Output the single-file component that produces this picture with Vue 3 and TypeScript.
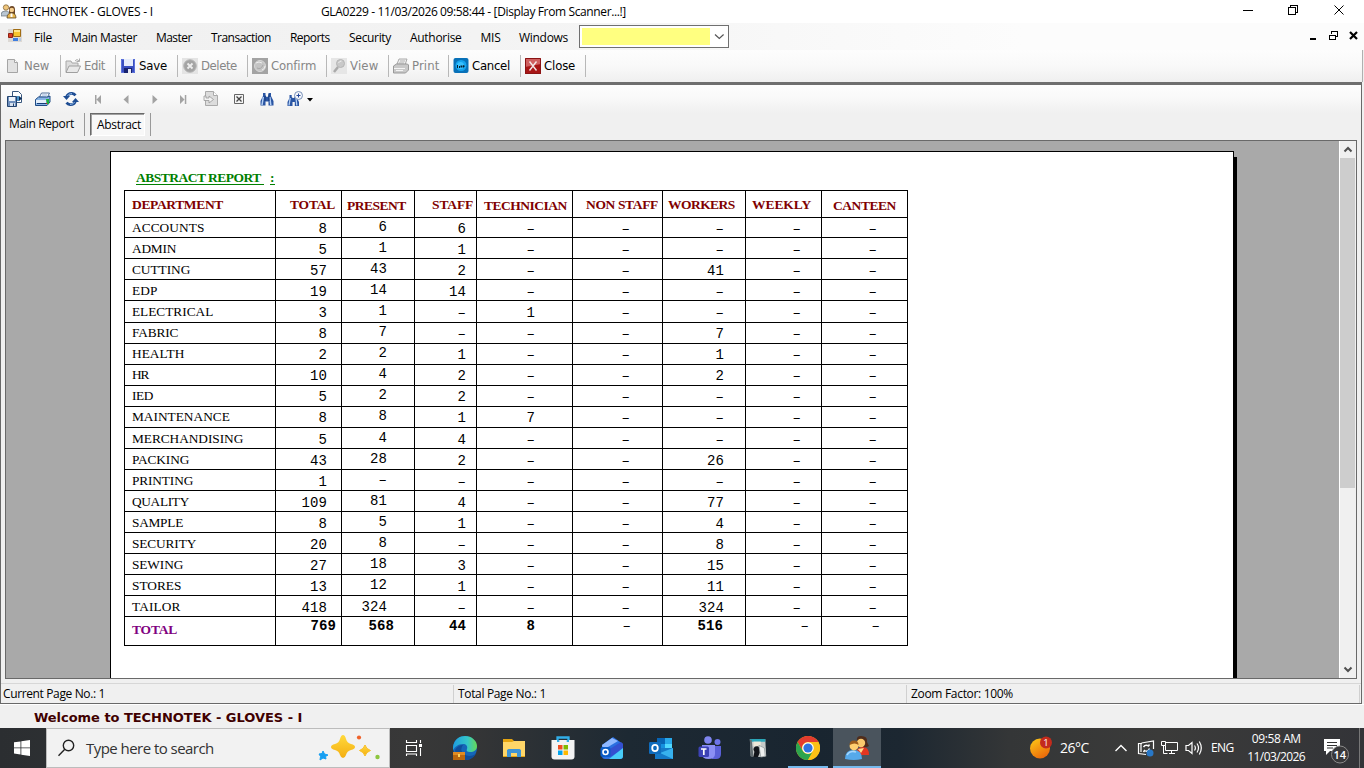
<script setup lang="ts">
import type { Directive } from 'vue'

// Tracks a label so that its ink spans the given number of pixels.
const vFit: Directive<HTMLElement, number> = {
  mounted(el, binding) {
    const natural = el.getBoundingClientRect().width
    const count = (el.textContent ?? '').trim().length
    if (count > 1) {
      const spacing = (binding.value - 0.7 - natural) / (count - 1)
      el.style.letterSpacing = spacing.toFixed(3) + 'px'
      el.style.marginRight = (-spacing).toFixed(3) + 'px'
    }
  },
}

interface Label { text: string; width: number }
interface Row { name: string; width: number; values: string[] }

const menu: Label[] = [
  { text: 'File', width: 19 },
  { text: 'Main Master', width: 67 },
  { text: 'Master', width: 37 },
  { text: 'Transaction', width: 61 },
  { text: 'Reports', width: 41 },
  { text: 'Security', width: 43 },
  { text: 'Authorise', width: 52.5 },
  { text: 'MIS', width: 21 },
  { text: 'Windows', width: 50 },
]

const tools = [
  { text: 'New', width: 26, icon: 'new', on: false },
  { text: 'Edit', width: 22, icon: 'edit', on: false },
  { text: 'Save', width: 29, icon: 'save', on: true },
  { text: 'Delete', width: 37, icon: 'delete', on: false },
  { text: 'Confirm', width: 46, icon: 'confirm', on: false },
  { text: 'View', width: 29, icon: 'view', on: false },
  { text: 'Print', width: 28, icon: 'print', on: false },
  { text: 'Cancel', width: 39, icon: 'cancel', on: true },
  { text: 'Close', width: 32, icon: 'close', on: true },
]

const heads = [
  { text: 'DEPARTMENT', width: 92 },
  { text: 'TOTAL', width: 46 },
  { text: 'PRESENT', width: 60, low: true },
  { text: 'STAFF', width: 42 },
  { text: 'TECHNICIAN', width: 84, low: true },
  { text: 'NON STAFF', width: 73 },
  { text: 'WORKERS', width: 68 },
  { text: 'WEEKLY', width: 60 },
  { text: 'CANTEEN', width: 64, low: true },
]

const row = (name: string, width: number, values: string): Row => ({
  name,
  width,
  values: values.replace(/-/g, '–').split(' '),
})

const rows: Row[] = [
  row('ACCOUNTS', 73, '8 6 6 - - - - -'),
  row('ADMIN', 45, '5 1 1 - - - - -'),
  row('CUTTING', 59, '57 43 2 - - 41 - -'),
  row('EDP', 26, '19 14 14 - - - - -'),
  row('ELECTRICAL', 82, '3 1 - 1 - - - -'),
  row('FABRIC', 47, '8 7 - - - 7 - -'),
  row('HEALTH', 53, '2 2 1 - - 1 - -'),
  row('HR', 18, '10 4 2 - - 2 - -'),
  row('IED', 22, '5 2 2 - - - - -'),
  row('MAINTENANCE', 98.5, '8 8 1 7 - - - -'),
  row('MERCHANDISING', 112, '5 4 4 - - - - -'),
  row('PACKING', 58, '43 28 2 - - 26 - -'),
  row('PRINTING', 62, '1 - - - - - - -'),
  row('QUALITY', 58, '109 81 4 - - 77 - -'),
  row('SAMPLE', 52, '8 5 1 - - 4 - -'),
  row('SECURITY', 65, '20 8 - - - 8 - -'),
  row('SEWING', 52, '27 18 3 - - 15 - -'),
  row('STORES', 50, '13 12 1 - - 11 - -'),
  row('TAILOR', 49, '418 324 - - - 324 - -'),
]
const totals = '769 568 44 8 – 516 – –'.split(' ')
</script>

<template>
  <div class="window">
    <header class="title">
      <svg class="app-icon" width="16" height="16" viewBox="0 0 16 16">
        <path d="M0 12q0-4 4-4 5 0 5 4v1H0z" fill="#b9c6d2" stroke="#54606c" stroke-width=".6" />
        <circle cx="5" cy="4.500" r="2.700" fill="#f0c67c" stroke="#876a3c" stroke-width=".8" />
        <path d="M8 6q0-3 3-3t3 4v5H8z" fill="#6b4423" />
        <circle cx="10.800" cy="7" r="2.300" fill="#f6cf8e" />
        <path d="M6 15q0-5 4.500-5t4.500 5z" fill="#e8b64c" stroke="#5e4a2c" stroke-width=".8" />
        <path d="M9.500 10.500h2V14h-2z" fill="#fff" />
      </svg>
      <span class="title-name"><span v-fit="132.700">TECHNOTEK - GLOVES - I</span></span>
      <span class="title-doc"><span v-fit="306">GLA0229 - 11/03/2026 09:58:44 - [Display From Scanner...!]</span></span>
      <svg class="win-buttons" width="110" height="20" viewBox="0 0 110 20" fill="none" stroke="#000" shape-rendering="crispEdges">
        <path d="M3 10.500h10M48.500 7.500h7v7h-7zM50.500 7V5.500h7v7H56" />
        <path d="M94.500 5.500l9 9M103.500 5.500l-9 9" shape-rendering="auto" />
      </svg>
    </header>

    <nav class="menubar">
      <svg class="form-icon" width="16" height="16" viewBox="0 0 16 16">
        <path d="M1 1h14v13H1z" fill="#dcd8d4" />
        <path d="M6.500 1.500h7v7h-7z" fill="#f7c52e" stroke="#a06c14" />
        <path d="M1.500 5.500h4v4h-4z" fill="#d83a23" stroke="#8c2114" />
        <path d="M6 10h5v3H6z" fill="#3d7de0" /><path d="M12 10h2v3h-2z" fill="#b7c9de" />
        <path d="M7 2h6v2H7z" fill="#ffe58a" />
      </svg>
      <span v-for="m in menu" :key="m.text" class="menu-item"><span v-fit="m.width">{{ m.text }}</span></span>
      <div class="combo">
        <i class="combo-fill"></i>
        <svg width="17" height="19" viewBox="0 0 17 19"><path d="M5 7.500l4.300 4 4.300-4" fill="none" stroke="#555" stroke-width="1.200" /></svg>
      </div>
      <svg class="mdi-buttons" width="50" height="14" viewBox="0 0 50 14" fill="none" stroke="#000" shape-rendering="crispEdges">
        <path d="M0 10h6" stroke-width="2" />
        <path d="M19.500 6.500h6v4h-6zM19 6h7M21.500 5V2.500h6v5H26M21 2h7" />
        <path d="M40 3l7 7M47 3l-7 7" stroke-width="2.200" shape-rendering="auto" />
      </svg>
    </nav>

    <div class="toolbar">
      <div v-for="t in tools" :key="t.text" class="tool" :class="{ on: t.on }">
        <svg width="16" height="16" viewBox="0 0 16 16">
          <template v-if="t.icon === 'new'">
            <path d="M1.500 1.500h7l3 3v10h-10z" fill="#e2e2e2" stroke="#a5a5a5" /><path d="M8.500 1.500v3h3" fill="#fff" stroke="#a5a5a5" />
          </template>
          <template v-else-if="t.icon === 'edit'">
            <path d="M1 14V3h5l1 2h6v3" fill="#ddd" stroke="#a8a8a8" /><path d="M1 14.500L4 8h11.500l-3 6.500z" fill="#e8e8e8" stroke="#9f9f9f" /><path d="M10 3q2-3 4 0M14.500.500v3h-3" fill="none" stroke="#aaa" />
          </template>
          <template v-else-if="t.icon === 'save'">
            <path d="M1 1h14v14H2l-1-1z" fill="#3a4fc0" /><path d="M1.500 1.500h13v13h-13z" fill="none" stroke="#5c72dc" /><path d="M4 1h9v7H4z" fill="#e6ecfb" /><path d="M4 10h8v5H4z" fill="#17226f" /><path d="M8 11h3v4H8z" fill="#e8eaf4" />
          </template>
          <template v-else-if="t.icon === 'delete'">
            <path d="M0 0h16v16H0z" fill="#e4e4e4" /><circle cx="8" cy="8" r="6.300" fill="#a4a4a4" stroke="#b8b8b8" /><path d="M5.500 5.500l5 5M10.500 5.500l-5 5" stroke="#eee" stroke-width="1.800" />
          </template>
          <template v-else-if="t.icon === 'confirm'">
            <path d="M0 0h16v16H0z" fill="#a3a3a3" /><circle cx="8" cy="8" r="5.500" fill="#c4c4c4" stroke="#d8d8d8" /><path d="M5 10q4 2 6-3" stroke="#a8a8a8" fill="none" /><path d="M10 12q3-1 3-4M4 5q3-2 6 0" stroke="#eee" fill="none" />
          </template>
          <template v-else-if="t.icon === 'view'">
            <path d="M0 0h16v16H0z" fill="#e6e6e6" /><path d="M3 14l4-5" stroke="#aaa" stroke-width="2.500" /><circle cx="9.500" cy="5.500" r="4" fill="#c9c9c9" stroke="#b5b5b5" /><path d="M7.500 5q1-2 3-2" fill="none" stroke="#f2f2f2" />
          </template>
          <template v-else-if="t.icon === 'print'">
            <path d="M4 6l2-5h8l-2 6z" fill="#eee" stroke="#aaa" /><path d="M7 3h5M6 5h5" stroke="#b5b5b5" /><path d="M.500 8l3-2h11l1 1v5l-3 3H.500z" fill="#c9c9c9" stroke="#999" /><path d="M1 10.500h11M3 12.500h7" stroke="#f4f4f4" />
          </template>
          <template v-else-if="t.icon === 'cancel'">
            <rect x=".5" width="15" height="15" rx="2" fill="#0871b8" /><circle cx="8" cy="7.500" r="5.500" fill="#16a4ee" /><circle cx="7.500" cy="7.500" r="3.500" fill="#39c1ff" /><path d="M4 7h1v3H4zM6 8h1v2H6zM7.500 7.500h2v2h-2zM10 7l2 1-2 2z" fill="#071d2d" />
          </template>
          <template v-else>
            <path d="M0 0h16v16H0z" fill="#a81616" /><path d="M0 0h16v6L0 9z" fill="#cf6060" /><path d="M.500.500h15v15H.500z" fill="none" stroke="#8b1414" /><path d="M4.500 3.500l7 9M11.500 3.500l-7 9" stroke="#f2e8e8" stroke-width="1.400" />
          </template>
        </svg>
        <span v-fit="t.width">{{ t.text }}</span>
      </div>
    </div>

    <section class="report">
      <div class="report-tools">
        <svg width="16" height="16" viewBox="0 0 16 16">
          <path d="M5.500.500h6l3 3v8h-9z" fill="#fff" stroke="#3a587e" /><path d="M12 5l3 2.500-3 2.500z" fill="#0a2a55" /><path d="M10 5h2v5h-2z" fill="#4a93c7" /><path d="M.500 5.500h9v10H.500z" fill="#6f90bd" stroke="#24446f" /><path d="M2 6h6v4H2z" fill="#eef3fa" /><path d="M3 12h5v3H3z" fill="#d8e2ef" /><path d="M6 12.500h1V15H6z" fill="#24446f" />
        </svg>
        <svg width="16" height="16" viewBox="0 0 16 16">
          <path d="M4.500 6l2-4h8l-2.500 5z" fill="#fff" stroke="#4f6e99" /><path d="M7 4h5M6 6h5" stroke="#8fb1dd" /><path d="M.500 8.500l3-2.500h9l2.500-1v6l-3 3.500H.500z" fill="#88b4e4" stroke="#1f4a84" /><path d="M1 9h10v3H1z" fill="#e4effb" /><path d="M11 8h3v5h-2z" fill="#1eb13b" /><path d="M11 12h1v1h-1z" fill="#d12" /><path d="M2 12.500h9" stroke="#173e78" />
        </svg>
        <svg width="16" height="16" viewBox="0 0 16 16" fill="none">
          <path d="M3.500 6Q5 2 9 2.300q2 .2 3.500 2M12.500 10Q11 14 7 13.700q-2-.2-3.500-2" stroke="#1e4d93" stroke-width="2.800" />
          <path d="M4 5.500Q5.500 2.500 9 2.500M12 10.500q-1.500 3-5 3" stroke="#8db7e8" stroke-width="1" />
          <path d="M0 5h7L3.500 9zM9 11h7l-3.500-4z" fill="#1e4d93" />
        </svg>
        <svg class="nudge" width="16" height="16" viewBox="0 0 16 16" fill="#a3a3a3"><path d="M5 4h1.500v9H5zM11 4v9L6.500 8.500z" /></svg>
        <svg class="nudge" width="16" height="16" viewBox="0 0 16 16" fill="#a3a3a3"><path d="M10.500 4v9L5.500 8.500z" /></svg>
        <svg width="16" height="16" viewBox="0 0 16 16" fill="#a3a3a3"><path d="M5.500 4v9l5-4.500z" /></svg>
        <svg width="16" height="16" viewBox="0 0 16 16" fill="#a3a3a3"><path d="M5 4v9l4.500-4.500zM9.800 4h1.500v9H9.800z" /></svg>
        <svg width="16" height="16" viewBox="0 0 16 16">
          <path d="M2.500.500h8l4 4v10h-12z" fill="#dcdcdc" stroke="#aaa" /><path d="M10.500.500v4h4" fill="#fff" stroke="#aaa" /><path d="M1 5v4.500h5v2.500l4.500-3.500L6 5v2H3V5z" fill="#f2f2f2" stroke="#999" stroke-width=".8" />
        </svg>
        <svg width="16" height="16" viewBox="0 0 16 16"><path d="M3.500 3.500h9v9h-9z" fill="#f4f4f4" stroke="#666" /><path d="M5.500 5.500l5 5M10.500 5.500l-5 5" stroke="#444" stroke-width="1.300" /></svg>
        <svg width="16" height="16" viewBox="0 0 16 16">
          <path d="M4 2h2.500v2l1 2h1l1-2V2H12v3l2.500 5v4.500h-5v-4h-3v4h-5V10L4 5z" fill="#2a55a3" /><path d="M4.300 6L3 14M10.800 6l1 8" stroke="#b4d0f5" stroke-width="1.500" /><path d="M6 5v5M10 3v7" stroke="#14387a" />
        </svg>
        <svg width="16" height="16" viewBox="0 0 16 16">
          <path d="M2.500 4h2.200v2l1 1h1l1-1V4H10v3l2 4v4H7.800v-4H5.500v4H.500v-4l2-4z" fill="#2a55a3" /><path d="M3.200 7L2 14.500M9 7l.8 7.500" stroke="#b4d0f5" stroke-width="1.300" /><circle cx="11.500" cy="4.500" r="4" fill="#f3f6fb" stroke="#7890b8" /><path d="M9.500 4.500h4M11.500 2.500v4" stroke="#23469a" />
        </svg>
        <svg class="caret" width="6" height="4" viewBox="0 0 6 4"><path d="M0 0h6L3 3.500z" /></svg>
      </div>

      <div class="tabs">
        <div class="tab"><span v-fit="66">Main Report</span></div>
        <div class="tab active"><span v-fit="45">Abstract</span></div>
        <i class="tab-end"></i>
      </div>

      <div class="viewer">
        <div class="canvas">
          <div class="page">
            <h1><span class="heading"><span v-fit="126">ABSTRACT REPORT</span></span><b>:</b></h1>
            <div class="table">
              <div class="row head">
                <div v-for="h in heads" :key="h.text" class="cell" :class="{ low: h.low }"><span v-fit="h.width">{{ h.text }}</span></div>
              </div>
              <div v-for="(r, i) in rows" :key="r.name" class="row" :class="{ tall: i === 4, raised: i > 4 && i < 10 }">
                <div class="cell name"><span v-fit="r.width">{{ r.name }}</span></div>
                <div v-for="(v, j) in r.values" :key="j" class="cell num">{{ v }}</div>
              </div>
              <div class="row total">
                <div class="cell name"><span v-fit="46">TOTAL</span></div>
                <div v-for="(v, j) in totals" :key="j" class="cell num">{{ v }}</div>
              </div>
            </div>
          </div>
          <i class="page-shadow"></i>
        </div>
        <div class="scrollbar">
          <svg width="16" height="17" viewBox="0 0 16 17"><path d="M4.500 10.500L8 7l3.500 3.500" fill="none" stroke="#505050" stroke-width="2" /></svg>
          <i class="thumb"></i>
          <svg width="16" height="17" viewBox="0 0 16 17"><path d="M4.500 6.500L8 10l3.500-3.500" fill="none" stroke="#505050" stroke-width="2" /></svg>
        </div>
      </div>

      <div class="status">
        <div><span v-fit="103">Current Page No.: 1</span></div>
        <div><span v-fit="89">Total Page No.: 1</span></div>
        <div><span v-fit="103">Zoom Factor: 100%</span></div>
      </div>
    </section>

    <div class="welcome"><span v-fit="269">Welcome to TECHNOTEK - GLOVES - I</span></div>

    <footer class="taskbar">
      <div class="start">
        <svg width="16" height="16" viewBox="0 0 16 16" fill="#fff"><path d="M0 2.300l6.500-.9v6.100H0zM7.300 1.300L16 0v7.500H7.300zM0 8.300h6.500v6.200L0 13.600zM7.300 8.300H16V16l-8.700-1.300z" /></svg>
      </div>
      <div class="search">
        <svg width="18" height="18" viewBox="0 0 18 18" fill="none" stroke="#222" stroke-width="1.400"><circle cx="10.500" cy="6.500" r="5.200" /><path d="M6.800 10.300L.500 16.700" /></svg>
        <span class="search-text"><span v-fit="129">Type here to search</span></span>
        <svg class="sparkles" width="66" height="28" viewBox="0 0 66 28">
          <defs><linearGradient id="gold" x2="0" y2="1"><stop stop-color="#ffd93b" /><stop offset="1" stop-color="#f4ae12" /></linearGradient></defs>
          <path d="M25 1q2 0 3 4 1 4 5 5 4 1 4 3t-4 3q-4 1-5 5-1 3-3 3t-3-3q-1-4-5-5-4-1-4-3t4-3q4-1 5-5 1-4 3-4z" fill="url(#gold)" />
          <path d="M47 11q1 4 5.500 5.500-4.500 1.500-5.500 5.500-1-4-5.500-5.500Q46 15 47 11z" fill="url(#gold)" stroke="#f9bd20" />
          <path d="M5 17l1.500 3 3.500 1-2.500 1.500.5 2.500-3-1-3 2 .5-3.500L1 20l3-.5z" fill="#169ff2" stroke="#169ff2" />
          <circle cx="41" cy="3.500" r="2.100" fill="#f0622a" /><circle cx="59.500" cy="23" r="2.200" fill="#8dc63f" />
        </svg>
      </div>
      <div class="task view">
        <svg width="18" height="18" viewBox="0 0 18 18" fill="none" stroke="#fff" stroke-width="1.100"><path d="M1.500 1v2.500h10V1M1.500 6.500h10v6h-10zM1.500 17v-2h10v2M15.500 1v3M15.500 9v8" /><path d="M14 5h3v3h-3z" fill="#fff" stroke="none" /></svg>
      </div>
      <div class="task">
        <svg width="26" height="26" viewBox="0 0 26 26">
          <defs><linearGradient id="edge"><stop stop-color="#1e9de0" /><stop offset=".6" stop-color="#35c6c8" /><stop offset="1" stop-color="#66d955" /></linearGradient></defs>
          <circle cx="13" cy="13" r="12" fill="#1566b8" /><path d="M1 12C2 4 8 1 13 1c7 0 12 5 12 10 0 4-3 6-7 6-3 0-4-1-3-3 1-3-1-5-4-5-5 0-8 3-10 6z" fill="url(#edge)" /><path d="M11 10q-4 5 1 9 5 4 12 0-4 6-11 6Q4 24 3 15q3-5 8-5z" fill="#0f4d9a" /><path d="M1 17h12v8H1z" fill="#ba670e" /><path d="M1 17h12v3H1z" fill="#e08b22" /><path d="M6 19h2v3H6z" fill="#ffd35b" />
        </svg>
      </div>
      <div class="task">
        <svg width="24" height="22" viewBox="0 0 24 22"><path d="M1 2h9l2 2h11v16H1z" fill="#e5a411" /><path d="M1 5h9l2-1h11v15H1z" fill="#ffd668" /><path d="M5 20v-7l1.500-1h11l1.500 1v7h-4v-4H9v4z" fill="#3e94d6" /></svg>
      </div>
      <div class="task">
        <svg width="24" height="26" viewBox="0 0 24 26"><path d="M6.500 7V2.500h11V7" fill="none" stroke="#31aee8" stroke-width="2.300" /><path d="M.500 5h23v16.500q0 3-3 3h-17q-3 0-3-3z" fill="#f3f3f3" /><path d="M6 5h2.300v2H6zM15.700 5H18v2h-2.300z" fill="#31aee8" /><path d="M7 10h4.500v4.500H7z" fill="#f04e23" /><path d="M12.500 10H17v4.500h-4.500z" fill="#7fba00" /><path d="M7 15.500h4.500V20H7z" fill="#00a4ef" /><path d="M12.500 15.500H17V20h-4.500z" fill="#ffb900" /></svg>
      </div>
      <div class="task">
        <svg width="24" height="24" viewBox="0 0 24 24"><path d="M2 9L13 1l10 7v12q0 3-3 3H5q-3 0-3-3z" fill="#2a6fe0" /><path d="M2 9L12 2l6 3L3 14z" fill="#8fb8ff" /><path d="M5 16L21 6l2 2v5L10 21z" fill="#3450d0" /><path d="M9 23l14-11v8q0 3-3 3z" fill="#48cdf8" /><rect x=".5" y="11" width="10" height="10" rx="2" fill="#0b5cc6" /><circle cx="5.500" cy="16" r="2.500" fill="none" stroke="#fff" stroke-width="1.600" /></svg>
      </div>
      <div class="task">
        <svg width="26" height="24" viewBox="0 0 26 24"><path d="M9 2h15v12H9z" fill="#1490df" /><path d="M9 2h8v6H9z" fill="#0764b5" /><path d="M17 2h7v6h-7z" fill="#28a8ea" /><path d="M17 8h7v7h-7z" fill="#50d9ff" /><path d="M7 12h18v11H7z" fill="#1479c8" /><path d="M25 12v11L12 17z" fill="#37b1ee" /><rect x="1" y="6" width="12" height="12" rx="1.200" fill="#0f6cbd" /><ellipse cx="7" cy="12" rx="2.800" ry="3.200" fill="none" stroke="#fff" stroke-width="1.800" /></svg>
      </div>
      <div class="task">
        <svg width="26" height="26" viewBox="0 0 26 26"><circle cx="11" cy="5" r="3.800" fill="#7f85ee" /><circle cx="20.500" cy="7" r="3" fill="#6d74e8" /><path d="M15 11h9v8q0 5-5 5h-4z" fill="#5a60d8" /><path d="M5 10h13v9q0 5-6.500 5T5 19z" fill="#8b8ff5" /><rect x="1.500" y="11.500" width="10.500" height="10.500" rx="1.500" fill="#3c42b5" /><path d="M4 14h5.500M6.800 14v6" stroke="#fff" stroke-width="1.700" /></svg>
      </div>
      <div class="task">
        <svg class="badge-card" width="20" height="22" viewBox="0 0 22 24"><path d="M2 2h17l1 19-7 1-10-1z" fill="#c7cbca" /><path d="M2 2h17v3H3z" fill="#2aa6b8" /><path d="M2 3h2l2 18H3z" fill="#626c70" /><path d="M6 5h8v5H6z" fill="#eee8d8" /><path d="M6 14q0-4 4-4 3 0 3 4v3l-2 5H6l1-6z" fill="#12151a" /><path d="M12 9l6 3 1 9-5 1z" fill="#edf0ef" stroke="#8f989a" stroke-width=".8" /></svg>
      </div>
      <div class="task running">
        <svg width="24" height="24" viewBox="0 0 24 24"><circle cx="12" cy="12" r="12" fill="#fbc116" /><path d="M1.600 6A12 12 0 0 1 22.400 6H12a6 6 0 0 0-5.200 9z" fill="#e33b2e" /><path d="M1.600 6A12 12 0 0 0 12 24l5.200-9A6 6 0 0 1 6.800 15z" fill="#2da44e" /><path d="M22.400 6H12a6 6 0 0 1 5.200 9L12 24A12 12 0 0 0 22.400 6z" fill="#fbc116" /><circle cx="12" cy="12" r="5.800" fill="#fff" /><circle cx="12" cy="12" r="4.600" fill="#2f73e0" /></svg>
      </div>
      <div class="task current">
        <svg width="26" height="26" viewBox="0 0 26 26"><path d="M12 20q0-8 7-8 6 0 6 8z" fill="#e33620" /><path d="M13 6q-1-5 4-5 7 0 6 6l2 4q-3 2-6 1z" fill="#4f2d1c" /><circle cx="17" cy="8" r="4.200" fill="#fac96d" /><path d="M14 14l3 4 3-5z" fill="#ffd98c" /><path d="M1 24q0-9 8.500-9T18 24q-8 2-17 0z" fill="#56a9ea" /><path d="M3 20q3-5 9-3" fill="none" stroke="#a7d8ff" stroke-width="1.500" /><circle cx="10" cy="11" r="4.400" fill="#ffcf70" /><path d="M5.500 10q0-4.500 4.500-4.500T14.500 10Q11 7 5.500 10z" fill="#9c5c1c" /></svg>
      </div>
      <div class="tray">
        <svg width="24" height="24" viewBox="0 0 24 24"><defs><linearGradient id="sun" x2=".6" y2="1"><stop stop-color="#ffcc17" /><stop offset="1" stop-color="#ea6a0b" /></linearGradient></defs><circle cx="11" cy="12.500" r="10" fill="url(#sun)" /><circle cx="17" cy="6.500" r="6" fill="#c42b1c" /><text x="17" y="9.800" text-anchor="middle" font-family="Open Sans, sans-serif" font-size="9.500" fill="#fff">1</text></svg>
        <span class="temp"><span v-fit="30">26°C</span></span>
        <svg class="up" width="14" height="10" viewBox="0 0 14 10"><path d="M1.500 8L7 2.500 12.500 8" fill="none" stroke="#fff" stroke-width="1.400" /></svg>
        <svg class="sync" width="18" height="17" viewBox="0 0 18 17" fill="none" stroke="#fff" stroke-width="1.200"><path d="M9 14.500l-7.500-1V3.500H5M16.500 9V1L4.500 3M4 4v8" /><path d="M6.500 7q2-3 5-1l1-1.500M12.500 8.500q-2 4-5 2L6.500 12" stroke-width="1.500" /><circle cx="13" cy="13" r="3.500" fill="#2878c8" stroke="none" /></svg>
        <svg class="net" width="17" height="16" viewBox="0 0 17 16" fill="none" stroke="#fff"><path d="M4.500 2.500h12v8h-12v-5M8 13.500h6M10.500 11v3M.500 1.500h4v4h-4zM2.500 5.500v8h4" /></svg>
        <svg class="vol" width="18" height="16" viewBox="0 0 18 16" fill="none" stroke="#fff" stroke-width="1.200"><path d="M1 5.500h2.500L7 2.500v11l-3.500-3H1zM9.500 5.500q1.800 2.500 0 5M12 3.500q3 4.500 0 9M14.300 1.500q4 6.500 0 13" /></svg>
        <span class="lang"><span v-fit="24">ENG</span></span>
        <div class="clock"><span><span v-fit="50">09:58 AM</span></span><span><span v-fit="59">11/03/2026</span></span></div>
        <svg class="notif" width="28" height="28" viewBox="0 0 28 28"><path d="M1 2h16v12H7l-4 4v-4H1z" fill="#fff" /><path d="M4 5.500h10M4 8.500h10M4 11h6" stroke="#333" /><circle cx="17" cy="17.500" r="8.500" fill="#38383a" stroke="#8a8a8a" /><text x="16.800" y="21.500" text-anchor="middle" font-family="Open Sans, sans-serif" font-size="11" font-weight="600" fill="#fff">14</text></svg>
      </div>
    </footer>
  </div>
</template>

<style>
html, body { margin: 0; overflow: hidden; }
</style>

<style scoped>
* { box-sizing: border-box; }
.window { width: 1364px; height: 768px; display: flex; flex-direction: column; background: #f0f0f0; color: #000; font: 12px/16px "Open Sans", "Noto Sans", sans-serif; white-space: nowrap; overflow: hidden; }
svg { display: block; flex: none; }
span > span { display: inline-block; }

.title { height: 23px; background: #fff; display: flex; padding-top: 4px; }
.app-icon { margin: -1px 4px 0 1px; }
.title-name { width: 300px; }
.title-doc { width: 922px; }
.win-buttons { margin-top: -4px; margin-left: -3px; }

.menubar { height: 27px; background: linear-gradient(90deg, #f0f0f0, #f3f3f3 35%, #fcfcfc 75%); display: grid; grid-template-columns: 34px 37px 85px 55px 79px 59px 61px 70.500px 38.500px 60px 150px 1fr; align-items: center; }
.form-icon { margin: -1px 0 0 7px; }
.menu-item { padding-top: 2px; }
.combo { height: 23px; border: 1px solid #707070; background: #fff; display: flex; align-items: center; padding: 0 1px; }
.combo-fill { width: 128px; height: 17px; background: #ffff80; margin-left: 1px; }
.mdi-buttons { justify-self: end; margin: -1px 4px 0 0; }

.toolbar { height: 32px; background: linear-gradient(#fdfdfd, #f9f9f9 50%, #efefef); border-right: 1px solid #b0b0b0; margin-right: 1px; display: grid; grid-template-columns: 59px 55px 62px 70px 79px 62px 60px 72px 65px; padding: 5px 0 5px 2px; }
.tool { border-right: 1px solid #b8b8b8; display: flex; align-items: center; color: #868686; font: 13px/16px "DejaVu Sans Condensed", "Noto Sans", sans-serif; padding-left: 4px; gap: 3px; height: 22px; }
.tool:first-child { gap: 2px; }
.tool.on { color: #000; }

.report { height: 622px; border: solid #696969; border-width: 3px 1px 1px 1px; border-top-color: #6e6e6e; box-shadow: inset 0 1px #fff; display: flex; flex-direction: column; margin-right: 2px; }
.report-tools { height: 28px; background: linear-gradient(#fdfdfd, #f9f9f9 45%, #f0f0f0); display: grid; grid-template-columns: repeat(11, 28px) 20px; align-items: center; justify-items: center; }
.nudge { margin-right: 2px; }
.caret { justify-self: start; margin-left: -2px; margin-top: 2px; }
.tabs { height: 27px; display: flex; align-items: flex-start; }
.tab { width: 84px; height: 23px; padding: 3px 0 0 8px; border-right: 1px solid #999; }
.tab.active { width: 55px; margin-left: 5px; border: 1px solid #fff; border-top-color: #696969; border-left-color: #696969; box-shadow: inset 1px 1px #a0a0a0; background: #f8f8f8; padding: 3px 0 0 6px; }
.tab-end { width: 1px; height: 23px; background: #999; margin-left: 5px; }

.viewer { height: 539px; margin: 0 4px; border: 1px solid #696969; display: flex; background: #f0f0f0; }
.canvas { width: 1334px; flex: none; background: #a9a9a9; display: flex; padding: 10px 0 0 104px; overflow: hidden; border-right: 1px solid #fff; }
.page { width: 1124px; background: #fff; border: 1px solid #000; border-bottom: 0; padding: 17px 0 0 13px; flex: none; }
.page-shadow { width: 3px; background: #000; margin-top: 6px; }
h1 { margin: 0 0 0 12px; height: 21px; font: bold 13.500px/18px "Liberation Serif", serif; color: #008000; display: flex; }
.heading { width: 128px; height: 16px; border-bottom: 1px solid #008000; }
h1 b { margin-left: 6px; width: 5px; height: 16px; border-bottom: 1px solid #008000; }
.table { width: 784px; border: 1px solid #000; border-right: 0; border-bottom: 0; font: 13.330px/16px "Liberation Serif", serif; }
.row { display: grid; grid-template-columns: 151px 66px 73px 62px 96px 90px 83px 76px 86px; height: 21px; }
.cell { border-right: 1px solid #000; border-bottom: 1px solid #000; padding-top: 3px; }
.cell:first-child { padding-left: 7px; }
.row.tall { height: 22px; }
.raised .cell { padding-top: 2px; }
.head { height: 27px; color: #800000; font-weight: bold; font-size: 13.500px; }
.head .cell { padding-top: 6px; }
.head .cell.low { padding-top: 7px; }
.head .cell:nth-child(2) { padding-left: 14px; }
.head .cell:nth-child(3) { padding-left: 5px; }
.head .cell:nth-child(4) { padding-left: 17px; }
.head .cell:nth-child(5) { padding-left: 7px; }
.head .cell:nth-child(6) { padding-left: 13px; }
.head .cell:nth-child(7) { padding-left: 5px; }
.head .cell:nth-child(8) { padding-left: 6px; }
.head .cell:nth-child(9) { padding-left: 11px; }
.num { font: 14px/16px "Liberation Mono", monospace; letter-spacing: .1px; text-align: right; padding-top: 4px; }
.raised .num { padding-top: 3px; }
.num:nth-child(2) { padding-right: 14px; }
.num:nth-child(3) { padding-right: 27px; padding-top: 2px; }
.raised .num:nth-child(3) { padding-top: 1px; }
.num:nth-child(4) { padding-right: 10px; }
.num:nth-child(5) { padding-right: 37px; }
.num:nth-child(6) { padding-right: 32px; }
.num:nth-child(7) { padding-right: 21px; }
.num:nth-child(8) { padding-right: 20px; }
.num:nth-child(9) { padding-right: 30px; }
.row:nth-child(2) { height: 20px; }
.row:nth-child(2) .cell { padding-top: 2px; }
.row:nth-child(2) .num { padding-top: 3px; }
.row:nth-child(2) .num:nth-child(3) { padding-top: 1px; }
.row:nth-child(20) .num:nth-child(3) { padding-top: 3px; }
.total { height: 29px; }
.total .name { color: #800080; font-weight: bold; font-size: 13.500px; padding-top: 5px; }
.total .num, .total .num:nth-child(3) { font-weight: bold; padding-top: 1px; }
.total .num:nth-child(2) { padding-right: 5px; }
.total .num:nth-child(3) { padding-right: 20px; }
.total .num:nth-child(6) { padding-right: 31px; font-weight: normal; }
.total .num:nth-child(7) { padding-right: 22px; }
.total .num:nth-child(8) { padding-right: 12px; font-weight: normal; }
.total .num:nth-child(9) { padding-right: 27px; font-weight: normal; }

.scrollbar { width: 16px; display: flex; flex-direction: column; }
.thumb { height: 330px; background: #cdcdcd; margin: 0 1px auto 0; }
.status { height: 20px; margin-top: 4px; border-top: 1px solid #d7d7d7; display: grid; grid-template-columns: 453px 453px 1fr; padding: 1px 1px 0 0; }
.status div { border-right: 1px solid #d0d0d0; padding-left: 2px; line-height: 17px; }
.status div + div { padding-left: 4px; }
.welcome { height: 24px; border-top: 1px solid #fff; padding: 5px 0 0 34px; color: #400000; font: bold 13px/16px "DejaVu Sans", sans-serif; }

.taskbar { height: 40px; display: flex; background: linear-gradient(90deg, #2b2e31 0, #383838 30%, #343536 35%, #1d2933 46%, #192530 60%, #1c2731 66%, #343637 74%, #3b3b3a 85%, #333438 100%); color: #fff; }
.start { width: 46px; display: flex; align-items: center; justify-content: center; padding-right: 2px; }
.search { width: 344px; background: #f2f2f2; border: 1px solid #bcbcbc; display: flex; align-items: center; padding-left: 11px; color: #333; font-size: 15px; line-height: 20px; }
.search-text { margin-left: 10px; width: 230px; }
.sparkles { margin: 0 0 0 2px; }
.task { width: 49px; flex: none; display: flex; align-items: center; justify-content: center; }
.task.view { width: 50px; padding-right: 2px; }
.badge-card { margin-right: 2px; }
.running { background: linear-gradient(#76b9ed, #76b9ed) 50% 100% / 40px 2px no-repeat; }
.current { width: 48px; background: #4a545d; border-bottom: 2px solid #76b9ed; padding-top: 2px; margin-left: 1px; }
.tray { flex: 1; display: flex; align-items: center; font-size: 12px; padding-left: 148px; }
.temp { font-size: 14px; width: 54px; margin-left: 7px; line-height: 20px; }
.up { margin-right: 9px; }
.sync { margin-right: 6px; }
.net { margin-right: 7px; }
.lang { margin-left: 8px; width: 36px; }
.clock { display: flex; flex-direction: column; align-items: center; width: 59px; line-height: 18px; margin-top: -1px; }
.notif { margin: 6px 0 0 17px; }
.tray::after { content: ""; width: 1px; height: 40px; background: #777; margin-left: 8px; }
</style>
